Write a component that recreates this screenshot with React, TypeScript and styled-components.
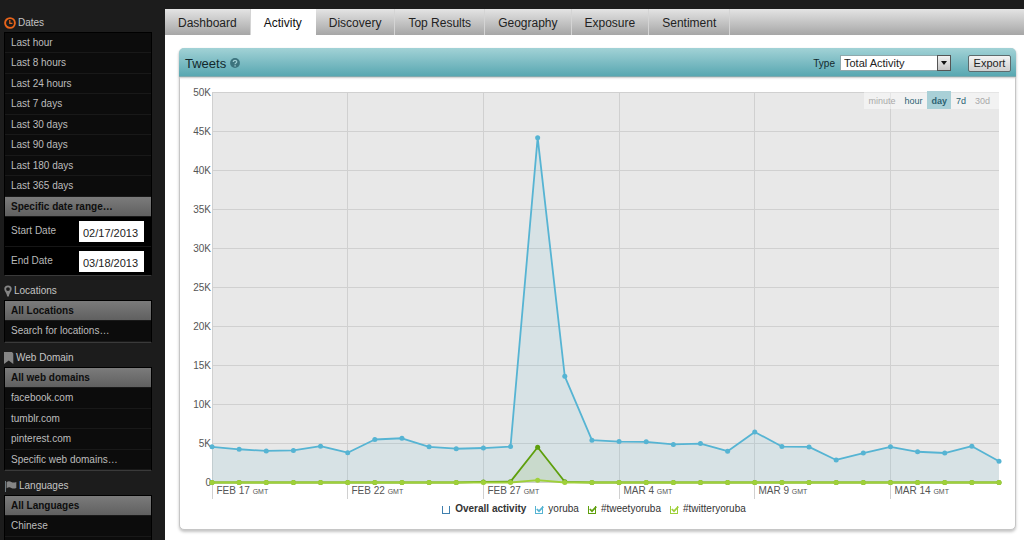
import React from "react";
import styled, { createGlobalStyle, css } from "styled-components";

const GlobalStyle = createGlobalStyle`
  * { box-sizing: border-box; }
  body {
    margin: 0;
    background: #1c1c1c;
    font-family: "Liberation Sans", Arial, Helvetica, sans-serif;
    font-size: 10px;
  }
  button, input, select { font-family: inherit; margin: 0; }
  h1, h2, ul { margin: 0; padding: 0; font-weight: normal; }
  ul { list-style: none; }
`;

const Page = styled.div`
  display: flex;
  min-height: 100vh;
`;

/* ---------- sidebar ---------- */

const Sidebar = styled.aside`
  flex: 0 0 165px;
  display: flex;
  flex-direction: column;
  padding: 11px 13px 0 4px;
  color: #c4c4c4;
`;

const Section = styled.section<{ $fill?: boolean }>`
  display: flex;
  flex-direction: column;
  flex-grow: ${(p) => (p.$fill ? 1 : 0)};
`;

const SectionTitle = styled.h2`
  display: flex;
  align-items: center;
  gap: 2px;
  height: 21px;
  padding-top: 2px;
  font-size: 10px;
  line-height: 14px;
  svg { flex: none; }
`;

const FilterList = styled.ul`
  flex-grow: 1;
  background: #0c0c0c;
  border: 1px solid #000;
  border-bottom-color: #3a3a3a;
  margin-bottom: 3px;
  ${Section}:last-child & {
    margin-bottom: 0;
    border-bottom: 0;
  }
`;

const FilterItem = styled.li`
  height: 20px;
  border-bottom: 1px solid #191919;
  &:nth-child(even) { height: 21px; }
`;

const FilterButton = styled.button<{ $active?: boolean }>`
  display: block;
  width: 100%;
  height: 100%;
  padding: 0 6px;
  border: 0;
  background: none;
  color: #bdbdbd;
  font-size: 10px;
  line-height: 20px;
  text-align: left;
  white-space: nowrap;
  ${(p) =>
    p.$active &&
    css`
      background: linear-gradient(#7b7b7b, #606060);
      color: #0d0d0d;
      font-weight: bold;
    `}
`;

const DateRow = styled.li`
  display: flex;
  justify-content: space-between;
  height: 29px;
  padding: 4px 7px 0 6px;
  background: #000;
  & + & { border-top: 1px solid #161616; }
  label { line-height: 19px; color: #b8b8b8; }
`;

const DateInput = styled.input`
  width: 65px;
  height: 21px;
  padding: 2px 4px 0;
  border: 0;
  border-radius: 0;
  background: #fff;
  color: #222;
  font-size: 11px;
`;

/* ---------- main area ---------- */

const Main = styled.main`
  flex: 1;
  min-width: 0;
  margin-top: 9px;
  background: #fff;
`;

const TabBar = styled.nav`
  display: flex;
  height: 26px;
  background: linear-gradient(#e4e4e4, #a6a6a6);
`;

const Tab = styled.a<{ $active?: boolean }>`
  padding: 0 13px;
  border-right: 1px solid #d4d4d4;
  color: #222;
  font-size: 12px;
  line-height: 28px;
  text-decoration: none;
  white-space: nowrap;
  ${(p) =>
    p.$active &&
    css`
      background: #fff;
      border-color: #fff;
      color: #111;
    `}
`;

const Panel = styled.section`
  margin: 13px 8px 10px 14px;
  border: 1px solid #c6c6c6;
  border-radius: 5px;
  background: #fff;
  box-shadow: 0 2px 3px #c4c4c4;
`;

const PanelHeader = styled.header`
  display: flex;
  align-items: center;
  height: 29px;
  margin: -1px -1px 0;
  padding: 2px 5px 0 6px;
  border-bottom: 1px solid #7fa9ae;
  border-radius: 5px 5px 0 0;
  background: linear-gradient(#a2d2d6, #58a7b1);
  box-shadow: 0 1px 2px #c8c8c8;
  color: #12292d;
`;

const PanelTitle = styled.h1`
  display: flex;
  align-items: center;
  gap: 4px;
  margin-right: auto;
  font-size: 13px;
`;

const TypeLabel = styled.label`
  margin-right: 5px;
  font-size: 10px;
`;

const SelectBox = styled.span`
  display: grid;
  width: 111px;
  height: 16px;
  margin-right: 17px;
  > * { grid-area: 1 / 1; }
`;

const Select = styled.select`
  appearance: none;
  width: 100%;
  padding: 0 18px 0 3px;
  border: 1px solid #8fa9ad;
  border-radius: 0;
  background: #fff;
  color: #222;
  font-size: 11px;
  line-height: 14px;
`;

const SelectArrow = styled.span`
  justify-self: end;
  display: grid;
  place-items: center;
  width: 14px;
  border: 1px solid #555;
  background: linear-gradient(#f2f2f2, #c4c4c4);
  pointer-events: none;
`;

const ExportButton = styled.button`
  width: 43px;
  height: 17px;
  padding: 0;
  border: 1px solid #5d6b6d;
  border-radius: 2px;
  background: linear-gradient(#f4f4f4, #cfcfcf);
  color: #222;
  font-size: 11px;
  line-height: 14px;
`;

const ChartArea = styled.div`
  position: relative;
`;

const ChartSvg = styled.svg`
  display: block;
  width: 100%;
  height: auto;
  font-size: 10px;
  fill: #555;
`;

const RangePicker = styled.div`
  position: absolute;
  top: 14px;
  right: 16px;
  display: flex;
  height: 18px;
  padding-right: 5px;
  background: rgba(255, 255, 255, 0.45);
`;

const RangeButton = styled.button<{ $active?: boolean }>`
  padding: 0 ${(p) => (p.$active ? 4 : 5)}px;
  border: 0;
  background: ${(p) => (p.$active ? "#a9d0d7" : "none")};
  color: #2d6272;
  font-size: 9px;
  line-height: 20px;
  font-weight: ${(p) => (p.$active ? "bold" : "normal")};
  &:disabled {
    padding: 0 4px;
    color: #a9a9a9;
  }
`;

const Legend = styled.div`
  display: flex;
  justify-content: center;
  gap: 9px;
  padding: 1px 7px 13px 0;
`;

const LegendItem = styled.label<{ $bold?: boolean }>`
  display: flex;
  align-items: center;
  gap: 4px;
  color: #333;
  font-size: 10px;
  line-height: 14px;
  font-weight: ${(p) => (p.$bold ? "bold" : "normal")};
`;

const CheckBox = styled.span`
  display: grid;
  width: 9px;
  height: 10px;
  > * { grid-area: 1 / 1; }
  svg { pointer-events: none; visibility: hidden; }
  input:checked + svg { visibility: visible; }
`;

const CheckInput = styled.input<{ $color: string }>`
  appearance: none;
  align-self: end;
  width: 8px;
  height: 8px;
  border: 1px solid ${(p) => p.$color};
  border-top: 0;
`;

/* ---------- icons ---------- */

const ClockIcon = () => (
  <svg width="12" height="12" viewBox="0 0 12 12" fill="none" stroke="#e8641b">
    <circle cx="6" cy="6" r="4.9" strokeWidth="1.9" />
    <path d="M5.8 3v3.3H8.4" strokeWidth="1.2" />
  </svg>
);

const PinIcon = () => (
  <svg width="8" height="12" viewBox="0 0 8 12">
    <path
      fill="#858585"
      fillRule="evenodd"
      d="M4 .4A3.7 3.7 0 0 0 .3 4.1C.3 6.3 2.9 8.3 3.2 11.6h1.600C5.1 8.3 7.7 6.3 7.7 4.1A3.7 3.7 0 0 0 4 .4zM4 2.2a1.900 1.900 0 1 1 0 3.800 1.900 1.900 0 0 1 0-3.800z"
    />
  </svg>
);

const BookmarkIcon = () => (
  <svg width="10" height="12" viewBox="0 0 10 12">
    <path fill="#858585" d="M0 0h8l1.300 1.400V12L4.700 8.400 0 12z" />
  </svg>
);

const FlagIcon = () => (
  <svg width="13" height="12" viewBox="0 0 13 12">
    <path stroke="#6f7a80" d="M1.500 1v11" />
    <path
      fill="#858585"
      d="M2.600 2.100c1.600-1.300 3.200-1.100 4.700-.2 1.600.8 3 .8 5 0v6c-1.900 1-3.500.9-5 0-1.500-.8-3-.8-4.700.4z"
    />
  </svg>
);

const HelpIcon = () => (
  <svg width="10" height="10" viewBox="0 0 10 10" role="img" aria-label="Help">
    <circle cx="5" cy="5" r="4.900" fill="#3c737d" />
    <path
      d="M3.300 4C3.300 1.800 6.800 1.900 6.700 3.900 6.700 5 5.100 5 5.100 6.200M5.100 7.200v1.200"
      fill="none"
      stroke="#9fcdd2"
      strokeWidth="1.300"
    />
  </svg>
);

/* ---------- data ---------- */

const datePresets = [
  "Last hour",
  "Last 8 hours",
  "Last 24 hours",
  "Last 7 days",
  "Last 30 days",
  "Last 90 days",
  "Last 180 days",
  "Last 365 days",
];

const tabs = [
  "Dashboard",
  "Activity",
  "Discovery",
  "Top Results",
  "Geography",
  "Exposure",
  "Sentiment",
];

const yoruba = [
  4580, 4260, 4050, 4110, 4650, 3820, 5510, 5670, 4580, 4330, 4420, 4600, 44210,
  13610, 5420, 5250, 5220, 4880, 4990, 4010, 6480, 4610, 4560, 2890, 3780, 4580,
  3940, 3780, 4650, 2730,
];
const tweetyoruba = yoruba.map(
  (_, i) => ({ 10: 70, 11: 110, 12: 4520, 13: 90 })[i] ?? 0
);
const twitteryoruba = yoruba.map((_, i) => (i === 12 ? 300 : 0));

const series = [
  { name: "yoruba", color: "#56b4d3", values: yoruba },
  { name: "#tweetyoruba", color: "#5e9f0c", values: tweetyoruba },
  { name: "#twitteryoruba", color: "#9fd03a", values: twitteryoruba },
];

const dateTicks = ["FEB 17", "FEB 22", "FEB 27", "MAR 4", "MAR 9", "MAR 14"];

/* ---------- chart ---------- */

const plot = { left: 32, right: 819, top: 15, bottom: 405 };
const xAt = (i: number) =>
  plot.left + (i * (plot.right - plot.left)) / (yoruba.length - 1);
const yAt = (v: number) =>
  plot.bottom - (v / 50000) * (plot.bottom - plot.top);

function Chart() {
  return (
    <ChartSvg viewBox="0 0 835 424" role="img" aria-label="Tweets per day">
      <rect
        x={plot.left}
        y={plot.top}
        width={plot.right - plot.left}
        height={plot.bottom - plot.top}
        fill="#e8e8e8"
      />
      {Array.from({ length: 11 }, (_, k) => {
        const y = Math.round(yAt(k * 5000));
        return (
          <g key={k}>
            <line x1={plot.left} x2={plot.right} y1={y + 0.5} y2={y + 0.5} stroke="#d0d0d0" />
            <text x={plot.left - 1} y={y + 4} textAnchor="end">
              {k === 0 ? "0" : `${k * 5}K`}
            </text>
          </g>
        );
      })}
      {dateTicks.map((label, k) => {
        const x = Math.floor(xAt(k * 5)) + 0.5;
        return (
          <g key={label}>
            <line x1={x} x2={x} y1={plot.top} y2={plot.bottom + 17} stroke="#d0d0d0" />
            <text x={x + 4} y={plot.bottom + 12}>
              {label} <tspan fontSize="7">GMT</tspan>
            </text>
          </g>
        );
      })}
      {series.map((s) => {
        const points = s.values.map((v, i) => `${xAt(i)},${yAt(v) + 0.5}`);
        return (
          <g key={s.name} fill={s.color}>
            <polygon
              fillOpacity="0.11"
              points={[
                `${plot.left},${plot.bottom}`,
                ...points,
                `${plot.right},${plot.bottom}`,
              ].join(" ")}
            />
            <polyline
              fill="none"
              stroke={s.color}
              strokeWidth="1.800"
              strokeLinejoin="round"
              points={points.join(" ")}
            />
            {s.values.map((v, i) => (
              <circle key={i} cx={xAt(i)} cy={yAt(v) + 0.5} r="2.500" />
            ))}
          </g>
        );
      })}
    </ChartSvg>
  );
}

function Filters({ items, active }: { items: string[]; active?: string }) {
  return (
    <>
      {items.map((item) => (
        <FilterItem key={item}>
          <FilterButton type="button" $active={item === active}>
            {item}
          </FilterButton>
        </FilterItem>
      ))}
    </>
  );
}

function LegendEntry(props: {
  name: string;
  color: string;
  checked?: boolean;
  bold?: boolean;
}) {
  return (
    <LegendItem $bold={props.bold}>
      <CheckBox>
        <CheckInput type="checkbox" defaultChecked={props.checked} $color={props.color} />
        <svg width="9" height="10" viewBox="0 0 9 10">
          <path d="M1.800 5l2.200 2.200L8.300 2.600" fill="none" stroke={props.color} strokeWidth="1.700" />
        </svg>
      </CheckBox>
      {props.name}
    </LegendItem>
  );
}

export default function App() {
  return (
    <>
      <GlobalStyle />
      <Page>
        <Sidebar>
          <Section>
            <SectionTitle>
              <ClockIcon /> Dates
            </SectionTitle>
            <FilterList>
              <Filters
                items={[...datePresets, "Specific date range…"]}
                active="Specific date range…"
              />
              <DateRow>
                <label htmlFor="start-date">Start Date</label>
                <DateInput id="start-date" type="text" defaultValue="02/17/2013" />
              </DateRow>
              <DateRow>
                <label htmlFor="end-date">End Date</label>
                <DateInput id="end-date" type="text" defaultValue="03/18/2013" />
              </DateRow>
            </FilterList>
          </Section>

          <Section>
            <SectionTitle>
              <PinIcon /> Locations
            </SectionTitle>
            <FilterList>
              <Filters items={["All Locations", "Search for locations…"]} active="All Locations" />
            </FilterList>
          </Section>

          <Section>
            <SectionTitle>
              <BookmarkIcon /> Web Domain
            </SectionTitle>
            <FilterList>
              <Filters
                items={[
                  "All web domains",
                  "facebook.com",
                  "tumblr.com",
                  "pinterest.com",
                  "Specific web domains…",
                ]}
                active="All web domains"
              />
            </FilterList>
          </Section>

          <Section $fill>
            <SectionTitle>
              <FlagIcon /> Languages
            </SectionTitle>
            <FilterList>
              <Filters items={["All Languages", "Chinese"]} active="All Languages" />
            </FilterList>
          </Section>
        </Sidebar>

        <Main>
          <TabBar>
            {tabs.map((tab) => (
              <Tab key={tab} href="#" $active={tab === "Activity"}>
                {tab}
              </Tab>
            ))}
          </TabBar>

          <Panel>
            <PanelHeader>
              <PanelTitle>
                Tweets <HelpIcon />
              </PanelTitle>
              <TypeLabel htmlFor="type">Type</TypeLabel>
              <SelectBox>
                <Select id="type">
                  <option>Total Activity</option>
                </Select>
                <SelectArrow>
                  <svg width="6" height="4" viewBox="0 0 6 4">
                    <path d="M0 0h6L3 4z" fill="#111" />
                  </svg>
                </SelectArrow>
              </SelectBox>
              <ExportButton type="button">Export</ExportButton>
            </PanelHeader>

            <ChartArea>
              <Chart />
              <RangePicker>
                <RangeButton type="button" disabled>minute</RangeButton>
                <RangeButton type="button">hour</RangeButton>
                <RangeButton type="button" $active>day</RangeButton>
                <RangeButton type="button">7d</RangeButton>
                <RangeButton type="button" disabled>30d</RangeButton>
              </RangePicker>
            </ChartArea>

            <Legend>
              <LegendEntry name="Overall activity" color="#3f7fae" bold />
              {series.map((s) => (
                <LegendEntry key={s.name} name={s.name} color={s.color} checked />
              ))}
            </Legend>
          </Panel>
        </Main>
      </Page>
    </>
  );
}
